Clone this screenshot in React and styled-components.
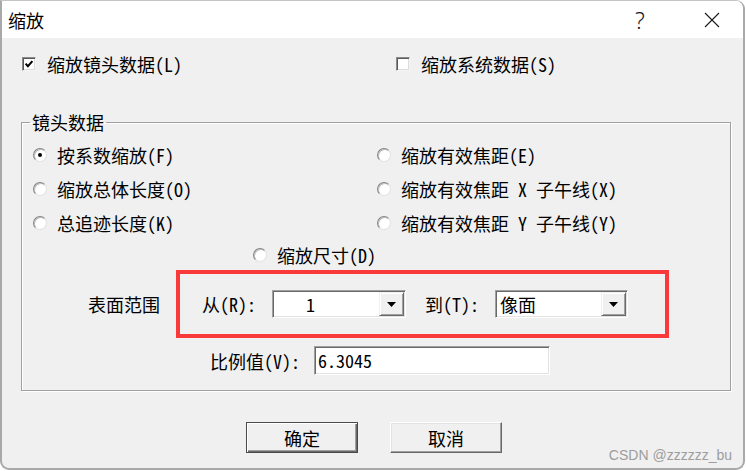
import React from 'react';
import styled, { createGlobalStyle, css } from 'styled-components';

const uiFont = `"Noto Sans Mono CJK SC", "Noto Sans CJK SC", "DejaVu Sans Mono", monospace`;

const GlobalStyle = createGlobalStyle`
  html, body {
    margin: 0;
    padding: 0;
    background: #ffffff;
  }
  body {
    width: 746px;
    height: 471px;
    overflow: hidden;
    font-family: ${uiFont};
    color: #000;
  }
`;

function App() {
  return (
    <>
      <GlobalStyle />
      <Window>
        <TitleBar>
          <Title>缩放</Title>
          <CaptionGroup>
            <CaptionButton $help>?</CaptionButton>
            <CaptionButton>
              <svg width="16" height="16" viewBox="0 0 16 16">
                <path d="M1 1 L15 15 M15 1 L1 15" stroke="#1a1a1a" strokeWidth="1.1" fill="none" />
              </svg>
            </CaptionButton>
          </CaptionGroup>
        </TitleBar>

        <Body>
          <CheckRow>
            <Option>
              <CheckBox>
                <svg width="10" height="10" viewBox="0 0 10 10">
                  <polyline points="1.6,4.6 3.9,7.2 8.4,2.2" stroke="#000" strokeWidth="2" fill="none" />
                </svg>
              </CheckBox>
              缩放镜头数据(L)
            </Option>
            <Option>
              <CheckBox />
              缩放系统数据(S)
            </Option>
          </CheckRow>

          <GroupBox>
            <GroupLegend>镜头数据</GroupLegend>
            <RadioGrid>
              <Option>
                <RadioBox $checked />
                按系数缩放(F)
              </Option>
              <Option>
                <RadioBox />
                缩放有效焦距(E)
              </Option>
              <Option>
                <RadioBox />
                缩放总体长度(O)
              </Option>
              <Option>
                <RadioBox />
                缩放有效焦距 X 子午线(X)
              </Option>
              <Option>
                <RadioBox />
                总追迹长度(K)
              </Option>
              <Option>
                <RadioBox />
                缩放有效焦距 Y 子午线(Y)
              </Option>
            </RadioGrid>
            <SingleRow>
              <Option>
                <RadioBox />
                缩放尺寸(D)
              </Option>
            </SingleRow>

            <RangeRow>
              <RangeLabel>表面范围</RangeLabel>
              <Highlight>
                <FieldLabel>从(R):</FieldLabel>
                <Combo $width={134} $spaced>
                  <ComboValue $indent={32}>1</ComboValue>
                  <ComboArrow>
                    <svg width="9" height="5" viewBox="0 0 9 5">
                      <polygon points="0,0 9,0 4.5,5" fill="#000" />
                    </svg>
                  </ComboArrow>
                </Combo>
                <FieldLabel>到(T):</FieldLabel>
                <Combo $width={133}>
                  <ComboValue $indent={3}>像面</ComboValue>
                  <ComboArrow>
                    <svg width="9" height="5" viewBox="0 0 9 5">
                      <polygon points="0,0 9,0 4.5,5" fill="#000" />
                    </svg>
                  </ComboArrow>
                </Combo>
              </Highlight>
            </RangeRow>

            <ScaleRow>
              <FieldLabel $gap={14}>比例值(V):</FieldLabel>
              <EditBox>6.3045</EditBox>
            </ScaleRow>
          </GroupBox>

          <ButtonRow>
            <DialogButton $default>确定</DialogButton>
            <DialogButton>取消</DialogButton>
          </ButtonRow>
        </Body>

        <Watermark>CSDN @zzzzzz_bu</Watermark>
      </Window>
    </>
  );
}

export default App;

const Window = styled.div`
  position: relative;
  box-sizing: border-box;
  width: 745px;
  height: 470px;
  border: 2px solid #a9a9a9;
  border-top: 1px solid #c4c4c4;
  border-radius: 0 9px 9px 9px;
  background: #f0f0f0;
  overflow: hidden;
  display: flex;
  flex-direction: column;
`;

const TitleBar = styled.div`
  display: flex;
  align-items: center;
  height: 37px;
  background: #ffffff;
`;

const Title = styled.div`
  flex: 1;
  margin-left: 6px;
  font-family: "Noto Sans CJK SC", sans-serif;
  font-size: 18px;
  line-height: 24px;
`;

const CaptionGroup = styled.div`
  display: flex;
  gap: 26px;
  padding-right: 8px;
`;

const CaptionButton = styled.div`
  display: flex;
  align-items: center;
  justify-content: center;
  width: 46px;
  height: 37px;
  ${(p) =>
    p.$help &&
    css`
      font-family: "Noto Sans", sans-serif;
      font-weight: 300;
      font-size: 23px;
      color: #1a1a1a;
    `}
`;

const Body = styled.div`
  display: flex;
  flex-direction: column;
  flex: 1;
`;

const CheckRow = styled.div`
  display: grid;
  grid-template-columns: 374px auto;
  margin-top: 16px;
  padding-left: 20px;
  height: 20px;
  align-items: center;
`;

const Option = styled.div`
  display: inline-flex;
  align-items: center;
  gap: 10px;
  font-size: 18px;
  line-height: 20px;
  white-space: pre;
`;

const CheckBox = styled.span`
  box-sizing: border-box;
  display: inline-flex;
  align-items: center;
  justify-content: center;
  width: 14px;
  height: 14px;
  background: #ffffff;
  border: 1px solid;
  border-color: #8a8a8a #f4f4f4 #f4f4f4 #8a8a8a;
  box-shadow: inset 1px 1px 0 #5a5a5a, inset -1px -1px 0 #dcdcdc;
  margin-right: 1px;
`;

const RadioBox = styled.span`
  box-sizing: border-box;
  display: inline-flex;
  align-items: center;
  justify-content: center;
  width: 14px;
  height: 14px;
  border-radius: 50%;
  background: #ffffff;
  border: 1.5px solid;
  border-color: #858585 #e2e2e2 #e2e2e2 #858585;
  box-shadow: inset 1px 1px 0 #bdbdbd;

  &::after {
    content: '';
    width: 4px;
    height: 4px;
    border-radius: 50%;
    background: ${(p) => (p.$checked ? '#000' : 'transparent')};
  }
`;

const GroupBox = styled.fieldset`
  margin: 38px 12px 0 19px;
  padding: 0 0 15px 0;
  border: 1px solid #a0a0a0;
  box-shadow: inset 1px 1px 0 #ffffff, 1px 1px 0 #ffffff;
`;

const GroupLegend = styled.legend`
  margin-left: 8px;
  padding: 0 2px;
  font-size: 18px;
  line-height: 20px;
`;

const RadioGrid = styled.div`
  display: grid;
  grid-template-columns: 344px 1fr;
  grid-auto-rows: 34px;
  align-items: center;
  margin-top: 6px;
  padding-left: 11px;
`;

const SingleRow = styled.div`
  display: flex;
  align-items: center;
  height: 30px;
  padding-left: 231px;
`;

const RangeRow = styled.div`
  display: flex;
  align-items: center;
  padding-left: 66px;
`;

const RangeLabel = styled.span`
  font-size: 18px;
  line-height: 20px;
  margin-right: 16px;
`;

const Highlight = styled.div`
  box-sizing: border-box;
  display: flex;
  align-items: center;
  width: 493px;
  height: 68px;
  padding-left: 22px;
  border: 4px solid #fa3a3a;
`;

const FieldLabel = styled.span`
  font-size: 18px;
  line-height: 20px;
  margin-right: ${(p) => p.$gap ?? 16}px;
  white-space: pre;
`;

const Combo = styled.div`
  box-sizing: border-box;
  display: flex;
  width: ${(p) => p.$width}px;
  height: 28px;
  margin-right: ${(p) => (p.$spaced ? 19 : 0)}px;
  background: #ffffff;
  border: 1px solid;
  border-color: #a0a0a0 #ffffff #ffffff #a0a0a0;
  box-shadow: inset 1px 1px 0 #696969, inset -1px -1px 0 #e3e3e3;
  padding: 1px;
`;

const ComboValue = styled.div`
  flex: 1;
  padding-left: ${(p) => p.$indent}px;
  font-size: 18px;
  line-height: 24px;
`;

const ComboArrow = styled.div`
  box-sizing: border-box;
  display: flex;
  align-items: center;
  justify-content: center;
  width: 25px;
  background: #f0f0f0;
  border: 1px solid;
  border-color: #f0f0f0 #696969 #696969 #f0f0f0;
  box-shadow: inset 1px 1px 0 #ffffff, inset -1px -1px 0 #a0a0a0;
`;

const ScaleRow = styled.div`
  display: flex;
  align-items: center;
  margin-top: 8px;
  padding-left: 188px;
`;

const EditBox = styled.div`
  box-sizing: border-box;
  width: 236px;
  height: 29px;
  padding-left: 3px;
  background: #ffffff;
  border: 1px solid;
  border-color: #a0a0a0 #ffffff #ffffff #a0a0a0;
  box-shadow: inset 1px 1px 0 #696969, inset -1px -1px 0 #e3e3e3;
  font-size: 18px;
  line-height: 26px;
`;

const ButtonRow = styled.div`
  display: flex;
  gap: 32px;
  margin-top: 31px;
  padding-left: 244px;
`;

const DialogButton = styled.button`
  box-sizing: border-box;
  width: 112px;
  height: 31px;
  padding: 0;
  background: #f0f0f0;
  color: #000;
  font-family: ${uiFont};
  font-size: 18px;
  line-height: 26px;
  border: 1px solid;
  border-color: #ffffff #696969 #696969 #ffffff;
  box-shadow: inset -1px -1px 0 #a0a0a0, inset 1px 1px 0 #e3e3e3;

  ${(p) =>
    p.$default &&
    css`
      border: 1px solid #4a4a4a;
      box-shadow: inset 1px 1px 0 #ffffff, inset -1px -1px 0 #696969,
        inset -2px -2px 0 #a0a0a0;
    `}
`;

const Watermark = styled.div`
  position: absolute;
  right: 11px;
  bottom: 5px;
  font-family: "Liberation Sans", Arial, sans-serif;
  font-size: 14px;
  color: #9d9d9d;
`;
